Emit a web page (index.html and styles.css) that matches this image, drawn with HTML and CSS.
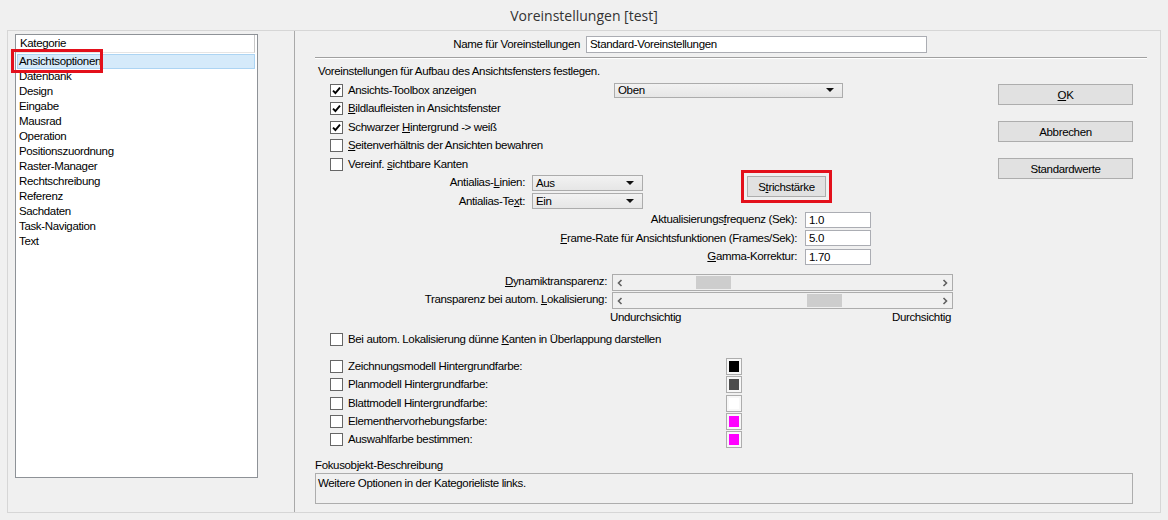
FILE: index.html
```html
<!DOCTYPE html>
<html lang="de">
<head>
    <meta charset="UTF-8">
    <title>Voreinstellungen [test]</title>
    <link rel="stylesheet" href="styles.css">
</head>
<body>
    <div class="titlebar">Voreinstellungen [test]</div>

    <div class="frame">
        <div class="left-pane">
            <div class="list">
                <div class="list-header">Kategorie</div>
                <div class="items">
                    <div class="item selected"><span class="marked">Ansichtsoptionen<span class="mark"></span></span></div>
                    <div class="item">Datenbank</div>
                    <div class="item">Design</div>
                    <div class="item">Eingabe</div>
                    <div class="item">Mausrad</div>
                    <div class="item">Operation</div>
                    <div class="item">Positionszuordnung</div>
                    <div class="item">Raster-Manager</div>
                    <div class="item">Rechtschreibung</div>
                    <div class="item">Referenz</div>
                    <div class="item">Sachdaten</div>
                    <div class="item">Task-Navigation</div>
                    <div class="item">Text</div>
                </div>
            </div>
        </div>

        <div class="right-pane">
            <div class="name-row">
                <label>Name für Voreinstellungen</label>
                <div class="textbox">Standard-Voreinstellungen</div>
            </div>
            <div class="groove"></div>
            <div class="intro">Voreinstellungen für Aufbau des Ansichtsfensters festlegen.</div>

            <div class="body">
                <div class="main">
                    <div class="toolbox-row">
                        <div class="check-row">
                            <span class="check"><svg viewBox="0 0 11 11"><path d="M2 5.6 L4.4 8 L9 2.6"/></svg></span>
                            <span>Ansichts-Toolbox anzeigen</span>
                        </div>
                        <div class="combo combo-wide">Oben</div>
                    </div>
                    <div class="check-row">
                        <span class="check"><svg viewBox="0 0 11 11"><path d="M2 5.6 L4.4 8 L9 2.6"/></svg></span>
                        <span><u>B</u>ildlaufleisten in Ansichtsfenster</span>
                    </div>
                    <div class="check-row">
                        <span class="check"><svg viewBox="0 0 11 11"><path d="M2 5.6 L4.4 8 L9 2.6"/></svg></span>
                        <span>Schwarzer <u>H</u>intergrund -&gt; weiß</span>
                    </div>
                    <div class="check-row">
                        <span class="check"></span>
                        <span><u>S</u>eitenverhältnis der Ansichten bewahren</span>
                    </div>
                    <div class="check-row">
                        <span class="check"></span>
                        <span>Vereinf. <u>s</u>ichtbare Kanten</span>
                    </div>

                    <div class="aa-block">
                        <div class="aa-grid">
                            <label>Antialias-<u>L</u>inien:</label>
                            <div class="combo">Aus</div>
                            <label>Antialias-Te<u>x</u>t:</label>
                            <div class="combo">Ein</div>
                        </div>
                        <button class="stroke-btn">S<u>t</u>richstärke</button>
                    </div>

                    <div class="num-grid">
                        <label>Aktualisierungs<u>f</u>requenz (Sek):</label>
                        <div class="textbox num">1.0</div>
                        <label><u>F</u>rame-Rate für Ansichtsfunktionen (Frames/Sek):</label>
                        <div class="textbox num">5.0</div>
                        <label><u>G</u>amma-Korrektur:</label>
                        <div class="textbox num">1.70</div>
                    </div>

                    <div class="scroll-grid">
                        <label><u>D</u>ynamiktransparenz:</label>
                        <div class="scrollbar">
                            <svg class="arrow" viewBox="0 0 6 8"><polyline points="4.5,1 1.5,4 4.5,7"/></svg>
                            <div class="track"><div class="thumb" style="margin-left: 67px"></div></div>
                            <svg class="arrow" viewBox="0 0 6 8"><polyline points="1.5,1 4.5,4 1.5,7"/></svg>
                        </div>
                        <label>Transparenz bei autom. <u>L</u>okalisierung:</label>
                        <div class="scrollbar">
                            <svg class="arrow" viewBox="0 0 6 8"><polyline points="4.5,1 1.5,4 4.5,7"/></svg>
                            <div class="track"><div class="thumb" style="margin-left: 178px"></div></div>
                            <svg class="arrow" viewBox="0 0 6 8"><polyline points="1.5,1 4.5,4 1.5,7"/></svg>
                        </div>
                    </div>
                    <div class="scale-labels">
                        <span>Undurchsichtig</span>
                        <span>Durchsichtig</span>
                    </div>

                    <div class="check-row gap-top">
                        <span class="check"></span>
                        <span>Bei autom. Lokalisierung dünne <u>K</u>anten in Überlappung darstellen</span>
                    </div>

                    <div class="color-grid">
                        <div class="check-row"><span class="check"></span><span>Zeichnungsmodell Hintergrundfarbe:</span></div>
                        <div class="swatch"><div class="swatch-fill black"></div></div>
                        <div class="check-row"><span class="check"></span><span>Planmodell Hintergrundfarbe:</span></div>
                        <div class="swatch"><div class="swatch-fill grey"></div></div>
                        <div class="check-row"><span class="check"></span><span>Blattmodell Hintergrundfarbe:</span></div>
                        <div class="swatch"><div class="swatch-fill white"></div></div>
                        <div class="check-row"><span class="check"></span><span>Elementhervorhebungsfarbe:</span></div>
                        <div class="swatch"><div class="swatch-fill magenta"></div></div>
                        <div class="check-row"><span class="check"></span><span>Auswahlfarbe bestimmen:</span></div>
                        <div class="swatch"><div class="swatch-fill magenta"></div></div>
                    </div>
                </div>

                <div class="side">
                    <button><u>O</u>K</button>
                    <button>Abbrechen</button>
                    <button>Standardwerte</button>
                </div>
            </div>

            <div class="focus-label">Fokusobjekt-Beschreibung</div>
            <div class="focus-box">Weitere Optionen in der Kategorieliste links.</div>
        </div>
    </div>
</body>
</html>
```

FILE: styles.css
```css
* {
    box-sizing: border-box;
}
body {
    margin: 0;
    width: 1168px;
    height: 520px;
    overflow: hidden;
    background: #f0f0f0;
    font-family: "Liberation Sans", Arial, sans-serif;
    font-size: 11.5px;
    letter-spacing: -0.35px;
    line-height: 15px;
    color: #000;
}
u {
    text-decoration: underline;
    text-underline-offset: 1px;
}
.titlebar {
    height: 30px;
    line-height: 31px;
    text-align: center;
    font-family: "Open Sans", "Noto Sans", sans-serif;
    font-size: 14px;
    letter-spacing: 0;
    color: #333;
}
.frame {
    display: flex;
    margin: 0 7px;
    height: 483px;
    border: 1px solid #d6d6d6;
}

/* Kategorie list */
.left-pane {
    width: 287px;
    padding: 3px 0 0 7px;
    border-right: 1px solid #a9a9a9;
}
.list {
    width: 243px;
    height: 444px;
    background: #fff;
    border: 1px solid #8e9297;
}
.list-header {
    height: 18px;
    margin-right: 2px;
    padding-left: 4px;
    line-height: 17px;
    border-right: 1px solid #c8c8c8;
    border-bottom: 1px solid #e5e5e5;
}
.items {
    padding-top: 1px;
}
.item {
    height: 15px;
    margin: 0 2px 0 1px;
    padding-left: 1px;
    line-height: 13px;
    border: 1px solid transparent;
}
.item.selected {
    background: #d5eafa;
    border-color: #acd4f3;
}
.marked {
    position: relative;
    display: inline-block;
}
.mark {
    position: absolute;
    left: -8px;
    top: -6px;
    width: 92px;
    height: 24px;
    border: 3px solid #e3101b;
}

/* right side */
.right-pane {
    flex: 1;
    padding: 5px 13px 0 20px;
}
.name-row {
    display: grid;
    grid-template-columns: 265px 341px;
    column-gap: 6px;
    align-items: center;
    height: 17px;
}
.name-row label {
    text-align: right;
}
.textbox {
    height: 17px;
    background: #fff;
    border: 1px solid #abadb3;
    padding-left: 3px;
    line-height: 15px;
}
.groove {
    margin-top: 4px;
    height: 2px;
    border-top: 1px solid #a0a0a0;
    border-bottom: 1px solid #fff;
}
.intro {
    margin: 5px 0 0 3px;
}
.body {
    display: flex;
    margin-top: 2px;
}
.main {
    flex: 1;
}
.check-row {
    display: flex;
    align-items: center;
    gap: 5px;
    height: 18.5px;
    padding-left: 15px;
}
.check {
    width: 13px;
    height: 13px;
    flex: none;
    background: #fff;
    border: 1px solid #666;
}
.check svg {
    display: block;
    width: 11px;
    height: 11px;
    fill: none;
    stroke: #000;
    stroke-width: 1.9;
}
.toolbox-row {
    display: grid;
    grid-template-columns: 299px 229px;
    align-items: center;
}
.combo {
    display: flex;
    align-items: center;
    justify-content: space-between;
    height: 16px;
    padding: 0 8px 0 3px;
    line-height: 14px;
    background: linear-gradient(#f2f2f2, #e6e6e6);
    border: 1px solid #acacac;
}
.combo::after {
    content: "";
    border-left: 4px solid transparent;
    border-right: 4px solid transparent;
    border-top: 4px solid #111;
}
.combo-wide {
    height: 15px;
}
.aa-block {
    display: flex;
    align-items: flex-start;
}
.aa-grid {
    display: grid;
    grid-template-columns: 210px 111px;
    grid-auto-rows: 18.5px;
    column-gap: 7px;
    align-items: center;
}
.aa-grid label,
.num-grid label,
.scroll-grid label {
    text-align: right;
}
button {
    height: 21px;
    padding: 0;
    font-family: inherit;
    font-size: inherit;
    letter-spacing: inherit;
    color: #000;
    background: #e1e1e1;
    border: 1px solid #adadad;
}
.stroke-btn {
    width: 79px;
    margin: 2.5px 0 0 104px;
    outline: 3px solid #e3101b;
    outline-offset: 3px;
}
.num-grid {
    display: grid;
    grid-template-columns: 482px 66px;
    grid-auto-rows: 18.5px;
    column-gap: 8px;
    align-items: center;
}
.textbox.num {
    height: 16px;
    line-height: 14px;
}
.scroll-grid {
    display: grid;
    grid-template-columns: 292px 341px;
    grid-auto-rows: 18px;
    column-gap: 5px;
    margin-top: 8px;
}
.scrollbar {
    display: flex;
    align-items: center;
    height: 17px;
    padding: 0 4px;
    background: #f0f0f0;
    border: 1px solid #acacac;
}
.arrow {
    width: 6px;
    height: 8px;
    fill: none;
    stroke: #606060;
    stroke-width: 1.6;
}
.track {
    flex: 1;
    height: 13px;
    margin: 0 6px;
}
.thumb {
    width: 35px;
    height: 13px;
    background: #cdcdcd;
}
.scale-labels {
    display: flex;
    justify-content: space-between;
    width: 341px;
    margin-left: 295px;
}
.gap-top {
    margin-top: 5px;
}
.color-grid {
    display: grid;
    grid-template-columns: 411px 16px;
    grid-auto-rows: 18.25px;
    align-items: center;
    margin-top: 9px;
}
.swatch {
    width: 16px;
    height: 17px;
    padding: 2px;
    background: #f7f7f7;
    border: 1px solid #adadad;
}
.swatch-fill {
    width: 100%;
    height: 100%;
}
.black { background: #000; }
.grey { background: #4d4d4d; }
.white { background: #fff; }
.magenta { background: #ff00ff; }
.side {
    display: flex;
    flex-direction: column;
    gap: 16px;
    width: 135px;
    margin-right: 14px;
    padding-top: 3px;
}
.focus-label {
    margin-top: 8.75px;
}
.focus-box {
    width: 818px;
    height: 31px;
    margin-top: 0.5px;
    padding: 2px 2px;
    border: 1px solid #adadad;
}
```
